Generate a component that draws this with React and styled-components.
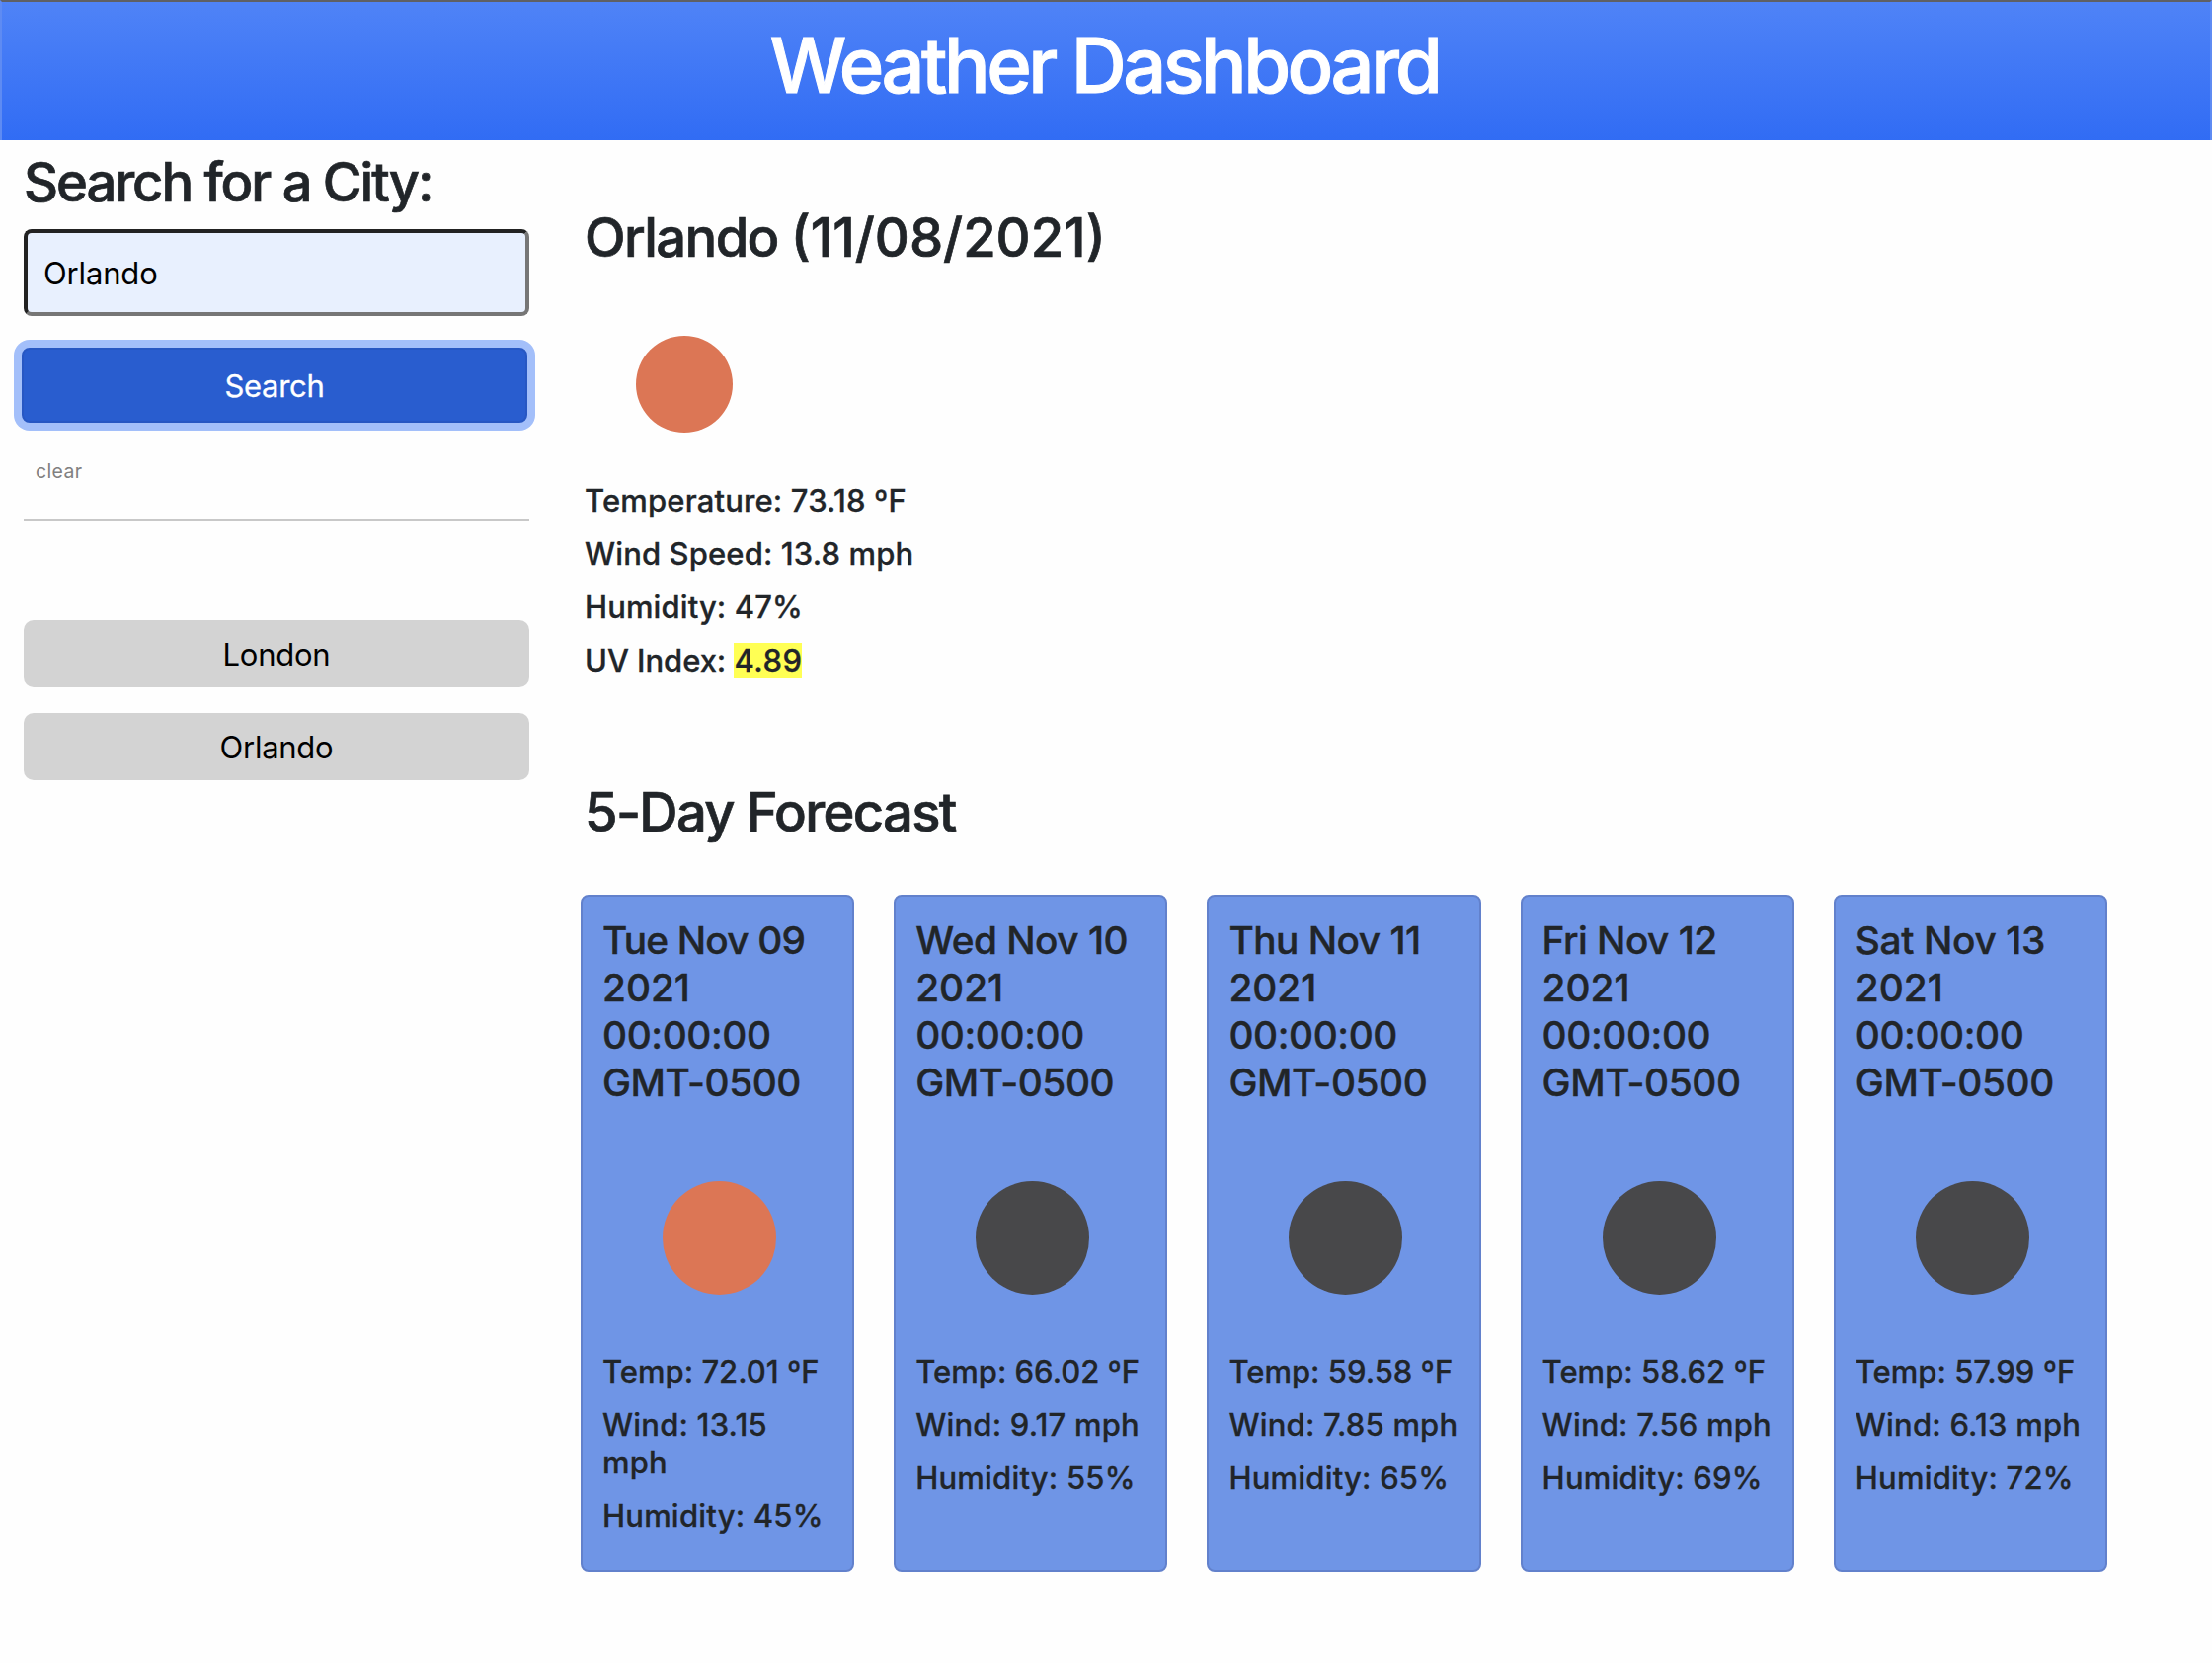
import React from "react";
import styled, { createGlobalStyle } from "styled-components";

const GlobalStyle = createGlobalStyle`
  *, *::before, *::after { box-sizing: border-box; }
  body {
    margin: 0;
    background: #fefefe;
    color: #212529;
    font-family: Inter, "Liberation Sans", sans-serif;
    font-size: 31px;
  }
  h1, h2, h3, p { margin: 0; font-weight: 500; }
`;

const Page = styled.div`
  min-height: 1684px;
`;

const Header = styled.header`
  height: 142px;
  padding: 16px 3px 0 0;
  border-top: 2px solid #5f6064;
  border-left: 2px solid #5e8bf3;
  border-right: 2px solid #5e8bf3;
  background: linear-gradient(#4f83f7, #316cf4);
  text-align: center;
`;

const Title = styled.h1`
  color: #fff;
  font-size: 77.6px;
  line-height: 96px;
  letter-spacing: -3.55px;
  -webkit-text-stroke: 1px currentColor;
`;

const Columns = styled.div`
  display: flex;
  align-items: flex-start;
`;

const Sidebar = styled.aside`
  display: flex;
  flex-direction: column;
  width: 560px;
  padding: 9px 24px 0;
`;

const Heading = styled.h2`
  font-size: 54.3px;
  line-height: 67px;
  letter-spacing: ${(p) => p.$track || 0}px;
  -webkit-text-stroke: 0.7px currentColor;
`;

const HeadingPart = styled.span`
  letter-spacing: ${(p) => p.$track || 0}px;
`;

const CityInput = styled.input`
  height: 88px;
  margin-top: 14px;
  padding: 0 16px;
  border: 4px solid;
  border-color: #222 #767676 #767676 #222;
  border-radius: 8px;
  outline: none;
  background: #e8f0fe;
  color: #000;
  font: 400 31px Inter, sans-serif;
  letter-spacing: -0.15px;
`;

const SearchButton = styled.button`
  height: 76px;
  margin: 32px 2px 0 -2px;
  padding: 0;
  border: 2px solid #2757c3;
  border-radius: 8px;
  background: #295dcf;
  box-shadow: 0 0 0 8px #a3bffa;
  color: #fff;
  font: 400 31px Inter, sans-serif;
  letter-spacing: -0.3px;
  -webkit-text-stroke: 0.3px currentColor;
`;

const ClearRow = styled.div`
  height: 100px;
  padding: 37px 12px 0;
  border-bottom: 2px solid #c8c8c8;
  color: #808080;
  font-size: 19.4px;
  line-height: 24px;
  letter-spacing: 0.4px;
`;

const History = styled.div`
  display: grid;
  gap: 26px;
  margin-top: 100px;
`;

const HistoryButton = styled.button`
  height: 68px;
  padding: 0;
  border: 0;
  border-radius: 10px;
  background: #d3d3d3;
  color: #000;
  font: 400 31px Inter, sans-serif;
  letter-spacing: -0.25px;
`;

const Main = styled.main`
  flex: 1;
  padding: 65px 106px 0 28px;
`;

const Current = styled.section`
  padding-left: 4px;
`;

const Dot = styled.div`
  width: ${(p) => p.$size}px;
  height: ${(p) => p.$size}px;
  border-radius: 50%;
  background: ${(p) => (p.$night ? "#48484a" : "#dc7655")};
`;

const CurrentIcon = styled.div`
  padding: 66px 0 50px 52px;
`;

const Stats = styled.div`
  display: grid;
  gap: 16px;
  line-height: 38px;
  -webkit-text-stroke: 0.3px currentColor;
`;

const Stat = styled.p`
  letter-spacing: ${(p) => p.$track || 0}px;
`;

const UvBadge = styled.span`
  display: inline-block;
  line-height: 36px;
  letter-spacing: 0.5px;
  background: #ffff54;
`;

const ForecastHeading = styled(Heading)`
  margin: 101px 0 50px 4px;
`;

const Cards = styled.div`
  display: grid;
  grid-template-columns: repeat(5, 1fr);
  gap: 40px;
`;

const Card = styled.article`
  height: 686px;
  padding: 20px 18px 0 20px;
  border: 2px solid #6281cc;
  border-radius: 8px;
  background: #6f95e6;
`;

const CardTitle = styled.h3`
  font-size: 38.8px;
  line-height: 48px;
  -webkit-text-stroke: 0.4px currentColor;
`;

const TitleLine = styled.span`
  display: block;
  white-space: nowrap;
  letter-spacing: ${(p) => p.$track || 0}px;
`;

const CardIcon = styled.div`
  display: flex;
  justify-content: center;
  padding: 76px 0 59px 2px;
`;

const days = [
  { day: "Tue Nov 09", track: -0.8, temp: "72.01", wind: "13.15", humidity: 45 },
  { day: "Wed Nov 10", track: -0.5, temp: "66.02", wind: "9.17", humidity: 55, night: true },
  { day: "Thu Nov 11", track: -0.5, temp: "59.58", wind: "7.85", humidity: 65, night: true },
  { day: "Fri Nov 12", track: -0.5, temp: "58.62", wind: "7.56", humidity: 69, night: true },
  { day: "Sat Nov 13", track: -0.35, temp: "57.99", wind: "6.13", humidity: 72, night: true },
];

export default function App() {
  return (
    <Page>
      <GlobalStyle />
      <Header>
        <Title>Weather Dashboard</Title>
      </Header>
      <Columns>
        <Sidebar>
          <Heading $track={-2.05}>Search for a City:</Heading>
          <CityInput defaultValue="Orlando" />
          <SearchButton>Search</SearchButton>
          <ClearRow>clear</ClearRow>
          <History>
            <HistoryButton>London</HistoryButton>
            <HistoryButton>Orlando</HistoryButton>
          </History>
        </Sidebar>
        <Main>
          <Current>
            <Heading>
              <HeadingPart $track={-1.6}>Orlando </HeadingPart>
              <HeadingPart>(11/08/2021)</HeadingPart>
            </Heading>
            <CurrentIcon>
              <Dot $size={98} />
            </CurrentIcon>
            <Stats>
              <Stat $track={0.15}>Temperature: 73.18 ºF</Stat>
              <Stat $track={0.12}>Wind Speed: 13.8 mph</Stat>
              <Stat $track={0.1}>Humidity: 47%</Stat>
              <Stat $track={-0.05}>
                UV Index: <UvBadge>4.89</UvBadge>
              </Stat>
            </Stats>
          </Current>
          <ForecastHeading $track={-1.65}>5-Day Forecast</ForecastHeading>
          <Cards>
            {days.map((d) => (
              <Card key={d.day}>
                <CardTitle>
                  <TitleLine $track={d.track}>{d.day}</TitleLine>
                  <TitleLine>2021</TitleLine>
                  <TitleLine $track={-0.4}>00:00:00</TitleLine>
                  <TitleLine $track={-0.4}>GMT-0500</TitleLine>
                </CardTitle>
                <CardIcon>
                  <Dot $size={115} $night={d.night} />
                </CardIcon>
                <Stats>
                  <Stat>Temp: {d.temp} ºF</Stat>
                  <Stat $track={0.2}>Wind: {d.wind} mph</Stat>
                  <Stat $track={0.2}>Humidity: {d.humidity}%</Stat>
                </Stats>
              </Card>
            ))}
          </Cards>
        </Main>
      </Columns>
    </Page>
  );
}
